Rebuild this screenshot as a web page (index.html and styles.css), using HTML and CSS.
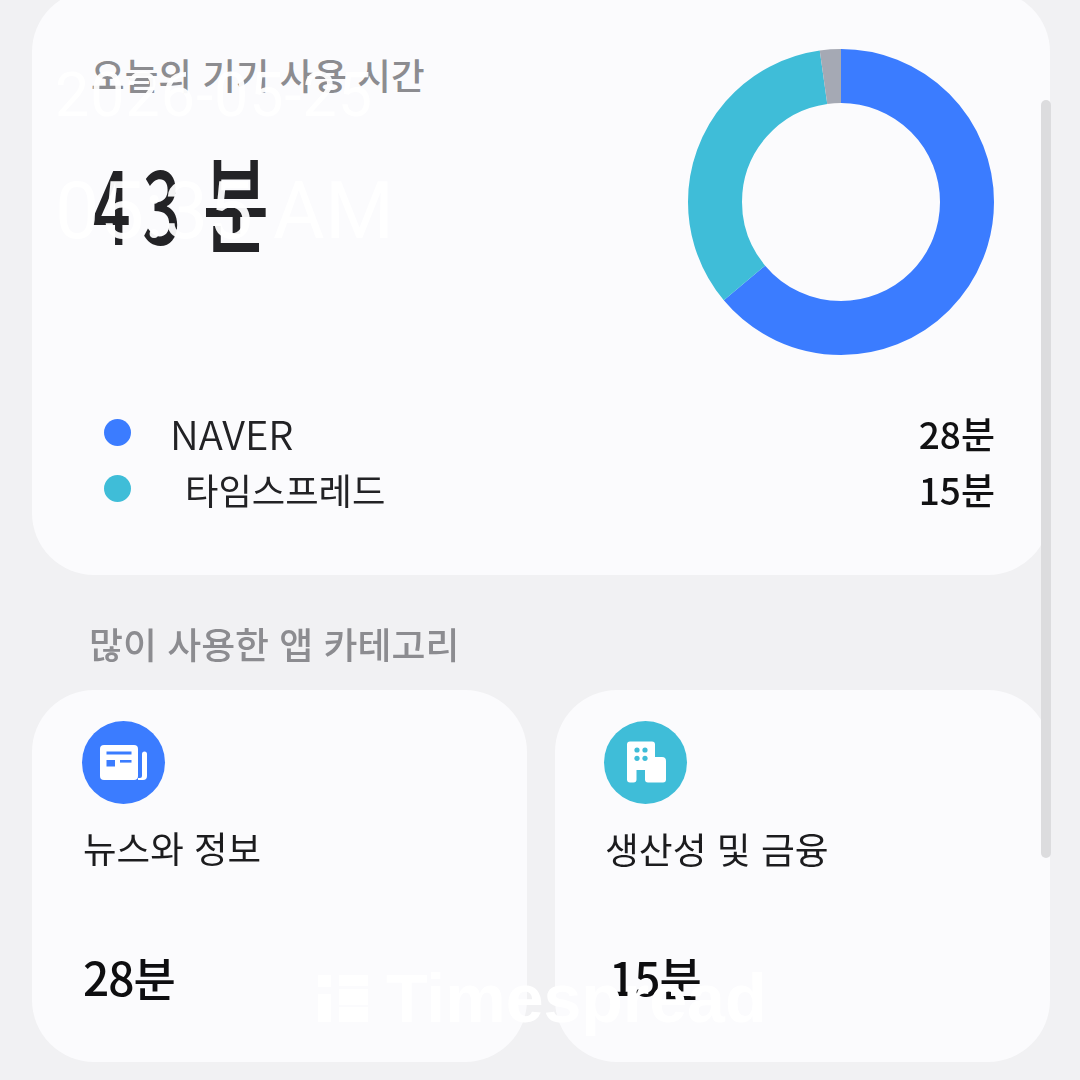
FILE: index.html
```html
<!DOCTYPE html>
<html lang="ko">
<head>
<meta charset="utf-8">
<title>디바이스 사용 시간</title>
<link rel="stylesheet" href="styles.css">
</head>
<body>
<main class="page">
  <section class="card summary">
    <div class="hero">
      <div class="hero-text">
        <h2 class="heading hero-heading">오늘의 기기 사용 시간</h2>
        <div class="total">43<span class="total-unit">분</span></div>
      </div>
      <svg class="donut" viewBox="0 0 308 308" aria-hidden="true">
        <g fill="none" stroke-width="54" transform="rotate(-90 154 154)">
          <circle cx="154" cy="154" r="126" stroke="#3b7cff" pathLength="360" stroke-dasharray="230 360"/>
          <circle cx="154" cy="154" r="126" stroke="#3fbdd8" pathLength="360" stroke-dasharray="122 360" stroke-dashoffset="-230"/>
          <circle cx="154" cy="154" r="126" stroke="#a5a9b4" pathLength="360" stroke-dasharray="8 360" stroke-dashoffset="-352"/>
        </g>
      </svg>
    </div>
    <ul class="legend">
      <li class="legend-row">
        <span class="dot dot-blue"></span>
        <span class="legend-name">NAVER</span>
        <span class="legend-time">28분</span>
      </li>
      <li class="legend-row">
        <span class="dot dot-teal"></span>
        <span class="legend-name legend-name-indent">타임스프레드</span>
        <span class="legend-time">15분</span>
      </li>
    </ul>
  </section>

  <h2 class="heading section-title">많이 사용한 앱 카테고리</h2>

  <section class="grid">
    <article class="card tile">
      <span class="badge badge-blue">
        <svg viewBox="0 0 83 83" aria-hidden="true">
          <rect x="18" y="24" width="38" height="35" rx="4" fill="#fff"/>
          <path d="M60 33a2.500 2.500 0 0 1 5 0v22a4 4 0 0 1-4 4h-5v-2h2a2 2 0 0 0 2-2z" fill="#fff"/>
          <rect x="24.500" y="30.500" width="25" height="3" fill="#3b7cff"/>
          <rect x="24.500" y="39" width="8.500" height="6.500" fill="#3b7cff"/>
          <rect x="38" y="39" width="11.500" height="2.600" fill="#3b7cff"/>
        </svg>
      </span>
      <div class="tile-name">뉴스와 정보</div>
      <div class="tile-time">28분</div>
    </article>
    <article class="card tile tile-right">
      <span class="badge badge-teal">
        <svg viewBox="0 0 83 83" aria-hidden="true">
          <path fill="#fff" d="M26 20.500h22a3 3 0 0 1 3 3v12.500h7a4 4 0 0 1 4 4v18.500a3 3 0 0 1-3 3H44a3 3 0 0 1-3-3V49h-8.500v9.500a3 3 0 0 1-3 3H26a3 3 0 0 1-3-3V23.500a3 3 0 0 1 3-3z"/>
          <g fill="#3fbdd8">
            <circle cx="33" cy="29" r="2.600"/>
            <circle cx="41" cy="29" r="2.600"/>
            <circle cx="33" cy="37.300" r="2.600"/>
            <circle cx="41" cy="37.300" r="2.600"/>
          </g>
        </svg>
      </span>
      <div class="tile-name tile-name-wide">생산성 및 금융</div>
      <div class="tile-time tile-time-wide">15분</div>
    </article>
  </section>
</main>

<div class="scrollbar"></div>

<div class="stamp">
  <div class="stamp-date">2026-05-25</div>
  <div class="stamp-time">05:35 AM</div>
</div>

<div class="brand">
  <svg class="brand-logo" viewBox="0 0 50 47" aria-hidden="true">
    <rect x="0" y="0" width="13" height="12"/>
    <rect x="0" y="19" width="13" height="28"/>
    <rect x="21" y="0" width="29" height="11"/>
    <rect x="21" y="14" width="29" height="16"/>
    <rect x="21" y="32" width="29" height="15"/>
  </svg>
  <span class="brand-name">Timespread</span>
</div>
</body>
</html>
```

FILE: styles.css
```css
* { box-sizing: border-box; }

html, body {
  margin: 0;
  width: 1080px;
  height: 1080px;
  overflow: hidden;
  background: #f1f1f3;
}

body {
  position: relative;
  font-family: "Noto Sans CJK KR", "Noto Sans", sans-serif;
  color: #1c1c1e;
}

.page {
  padding: 0 30px 0 32px;
  margin-top: -10px;
  filter: blur(0.6px);
}

.card {
  background: #fbfbfd;
  border-radius: 62px;
}

.summary {
  height: 585px;
  padding: 58px 55px 0 60px;
}

.hero {
  display: flex;
  justify-content: space-between;
  align-items: flex-start;
  height: 328px;
}

.hero-text {
  display: flex;
  flex-direction: column;
  align-items: flex-start;
}

.heading {
  margin: 0;
  font-size: 36.900px;
  line-height: 40px;
  font-weight: 500;
  color: #8c8c90;
}

.hero-heading {
  margin: 7px 0 0 -1px;
  font-size: 36.600px;
}

.total {
  margin-top: 44px;
  font-size: 100px;
  line-height: 120px;
  font-weight: 500;
  letter-spacing: 17px;
  color: #232326;
  transform: scaleX(0.68);
  transform-origin: left center;
}

.total-unit {
  font-size: 106px;
  margin-left: 15px;
  letter-spacing: 0;
}

.donut {
  display: block;
  width: 308px;
  height: 308px;
  flex: none;
}

.legend {
  list-style: none;
  margin: 0;
  padding: 29px 0 0 12px;
}

.legend-row {
  display: flex;
  align-items: center;
  height: 56px;
  font-size: 37px;
}

.dot {
  width: 27px;
  height: 27px;
  border-radius: 50%;
  flex: none;
  margin-right: 39px;
  margin-top: -1px;
}

.dot-blue { background: #3b7cff; }
.dot-teal { background: #3fbdd8; }

.legend-name {
  flex: 1;
  font-size: 40px;
  font-weight: 350;
  color: #222225;
}

.legend-name-indent {
  padding-left: 15px;
  font-size: 36.300px;
  font-weight: 400;
}

.legend-time {
  font-weight: 500;
  color: #111113;
}

.section-title {
  margin: 48px 0 0 57px;
  height: 67px;
}

.grid {
  display: grid;
  grid-template-columns: 495px 495px;
  gap: 28px;
}

.tile {
  height: 372px;
  padding: 31px 0 0 50px;
}

.tile-right {
  padding-left: 49px;
}

.badge {
  display: block;
  width: 83px;
  height: 83px;
  border-radius: 50%;
}

.badge svg { display: block; width: 83px; height: 83px; }
.badge-blue { background: #3b7cff; }
.badge-teal { background: #3fbdd8; }

.tile-name {
  margin: 19px 0 0 1px;
  font-size: 36.500px;
  line-height: 50px;
  color: #1c1c1e;
}

.tile-name-wide { font-size: 36.800px; }

.tile-time {
  margin: 71px 0 0 1px;
  font-size: 46px;
  line-height: 64px;
  font-weight: 500;
  letter-spacing: -1px;
  color: #0e0e10;
}

.tile-time-wide { margin-left: 5px; }

.scrollbar {
  position: absolute;
  left: 1041px;
  top: 100px;
  width: 10px;
  height: 758px;
  border-radius: 5px;
  background: #dcdcde;
}

.stamp {
  position: absolute;
  left: 55px;
  top: 60px;
  font-family: Roboto, sans-serif;
  font-weight: 400;
  color: rgba(255, 255, 255, 0.95);
  white-space: nowrap;
}

.stamp-date {
  font-size: 61px;
  line-height: 70px;
  letter-spacing: 1px;
}

.stamp-time {
  margin-top: 36px;
  font-size: 79px;
  line-height: 90px;
  letter-spacing: 0.300px;
}

.brand {
  position: absolute;
  left: 318px;
  top: 960px;
  display: flex;
  align-items: center;
  gap: 18px;
  color: #fff;
  white-space: nowrap;
}

.brand-logo {
  display: block;
  width: 50px;
  height: 47px;
  fill: #fff;
}

.brand-name {
  font-family: "Liberation Sans", sans-serif;
  font-size: 68px;
  line-height: 76px;
  font-weight: 700;
}
```
